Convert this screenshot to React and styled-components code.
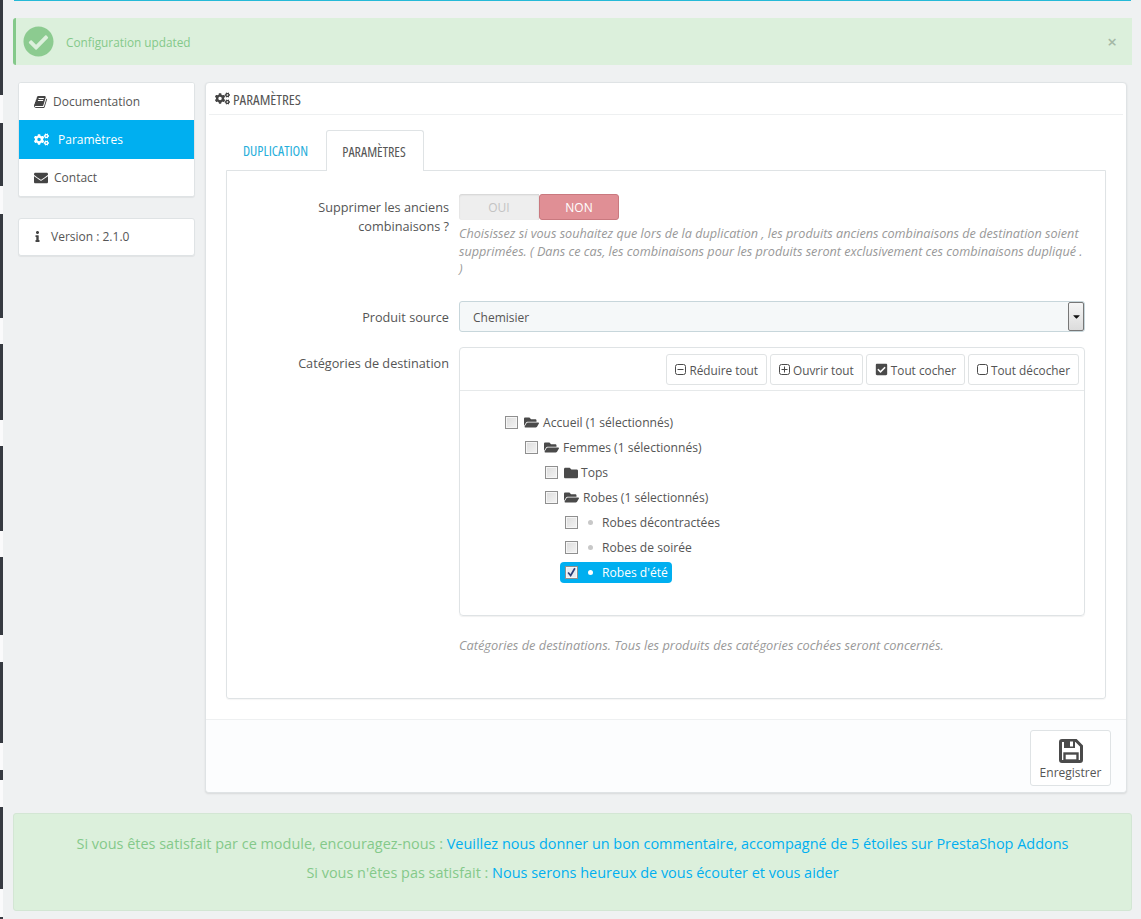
import React from 'react';
import styled, { createGlobalStyle } from 'styled-components';
import {
  FaCogs, FaEnvelope, FaInfo, FaCheckCircle, FaFolder, FaFolderOpen,
  FaCheckSquare, FaCaretDown,
} from 'react-icons/fa';

const GlobalStyle = createGlobalStyle`
  html, body {
    margin: 0;
    padding: 0;
    background: #eff1f2;
    font-family: "Open Sans", "Liberation Sans", sans-serif;
    font-size: 12px;
    color: #555;
  }
`;

const stripParts = [95, 28, 63, 28, 104, 26, 76, 26, 85, 26, 78, 27, 81, 27, 10, 27, 82, 28, 2];

const BookIcon = () => (
  <svg viewBox="0 0 1792 1792" width="14" height="14" fill="currentColor">
    <path d="M1639 478q40 57 18 129l-275 906q-19 64-76.5 107.5t-122.5 43.5h-923q-77 0-148.5-53.5t-99.5-131.5q-24-67-2-127 0-4 3-27t4-37q1-8-3-21.5t-3-19.5q2-11 8-21t16.5-23.5 16.5-23.5q23-38 45-91.5t30-91.5q3-10 .5-30t-.5-28q3-11 17-28t17-23q21-36 42-92t25-90q1-9-2.5-32t.5-28q4-13 22-30.5t22-22.5q19-26 42.5-84.5t27.5-96.5q1-8-3-25.5t-2-26.5q2-8 9-18t18-23 17-21q8-12 16.5-30.5t15-35 16-36 19.5-32 26.5-23.5 36-11.5 47.5 5.5l-1 3q38-9 51-9h761q74 0 114 56t18 130l-274 906q-36 119-71.5 153.5t-128.5 34.5h-869q-27 0-38 15-11 16-1 43 24 70 144 70h923q29 0 56-15.5t35-41.5l300-987q7-22 5-57 38 15 59 43zm-1064 2q-4 13 2 22.5t20 9.5h608q13 0 25.5-9.5t16.5-22.5l21-64q4-13-2-22.5t-20-9.5h-608q-13 0-25.5 9.5t-16.5 22.5zm-83 256q-4 13 2 22.5t20 9.5h608q13 0 25.5-9.5t16.5-22.5l21-64q4-13-2-22.5t-20-9.5h-608q-13 0-25.5 9.5t-16.5 22.5z" />
  </svg>
);

const SaveIcon = () => (
  <svg viewBox="0 0 24 24" width="24" height="24">
    <path d="M1.5 3 Q1.5 1.5 3 1.5 H17 L22.5 7 V21 Q22.5 22.5 21 22.5 H3 Q1.5 22.5 1.5 21 Z" fill="none" stroke="#4a4a4a" strokeWidth="3" />
    <rect x="5" y="1" width="11" height="8" fill="#4a4a4a" />
    <rect x="11" y="2.5" width="3" height="5" fill="#fff" />
    <rect x="5.5" y="14.5" width="13" height="7" fill="none" stroke="#4a4a4a" strokeWidth="2.4" />
  </svg>
);

// thin outlined square of the tree toolbar, with a minus, a plus or nothing in it
const SquareIcon = ({ sign }) => (
  <svg viewBox="0 0 11 11" width="11" height="11" fill="none" stroke="#4a4a4a">
    <rect x="0.5" y="0.5" width="10" height="10" rx="2" />
    {sign && <path d="M2.5 5.5 H8.5" />}
    {sign === 'plus' && <path d="M5.5 2.5 V8.5" />}
  </svg>
);

const App = () => {
  return (
    <Page>
      <GlobalStyle />
      <Strip>
        {stripParts.map((h, i) => (
          <StripPart key={i} $light={i % 2 === 1} style={{ height: h }} />
        ))}
      </Strip>
      <Content>
        <TopLine />
        <Alert>
          <FaCheckCircle size={31} color="#8ccb90" />
          <AlertText>Configuration updated</AlertText>
          <Close>×</Close>
        </Alert>

        <Columns>
          <Side>
            <Card>
              <MenuItem $gap={5}>
                <BookIcon />
                <span>Documentation</span>
              </MenuItem>
              <MenuItem $gap={9} $active>
                <FaCogs size={15} />
                <span>Paramètres</span>
              </MenuItem>
              <MenuItem $gap={6}>
                <FaEnvelope size={14} />
                <span>Contact</span>
              </MenuItem>
            </Card>
            <Card>
              <VersionRow>
                <FaInfo size={11} />
                <span>Version : 2.1.0</span>
              </VersionRow>
            </Card>
          </Side>

          <Panel>
            <PanelHead>
              <FaCogs size={15} />
              <span>PARAMÈTRES</span>
            </PanelHead>
            <PanelBody>
              <Tabs>
                <Tab>DUPLICATION</Tab>
                <Tab $active>PARAMÈTRES</Tab>
              </Tabs>
              <TabBox>
                <FormRow>
                  <Label $top={4}>Supprimer les anciens combinaisons ?</Label>
                  <Field>
                    <Toggle>
                      <ToggleOff>OUI</ToggleOff>
                      <ToggleOn>NON</ToggleOn>
                    </Toggle>
                    <Hint>
                      Choisissez si vous souhaitez que lors de la duplication , les produits anciens combinaisons de destination soient supprimées. ( Dans ce cas, les combinaisons pour les produits seront exclusivement ces combinaisons dupliqué . )
                    </Hint>
                  </Field>
                </FormRow>

                <SelectRow>
                  <Label $top={7}>Produit source</Label>
                  <Field>
                    <SelectBox>
                      <SelectText>Chemisier</SelectText>
                      <SelectArrow><FaCaretDown size={11} /></SelectArrow>
                    </SelectBox>
                  </Field>
                </SelectRow>

                <CategoryRow>
                  <Label $top={7}>Catégories de destination</Label>
                  <Field>
                    <TreePanel>
                      <TreeTools>
                        <ToolButton><SquareIcon sign="minus" />Réduire tout</ToolButton>
                        <ToolButton><SquareIcon sign="plus" />Ouvrir tout</ToolButton>
                        <ToolButton><FaCheckSquare size={13} />Tout cocher</ToolButton>
                        <ToolButton><SquareIcon />Tout décocher</ToolButton>
                      </TreeTools>
                      <Tree>
                        <TreeRow $level={0}>
                          <Check /><FolderIcon><FaFolderOpen size={15} /></FolderIcon>Accueil (1 sélectionnés)
                        </TreeRow>
                        <TreeRow $level={1}>
                          <Check /><FolderIcon><FaFolderOpen size={15} /></FolderIcon>Femmes (1 sélectionnés)
                        </TreeRow>
                        <TreeRow $level={2}>
                          <Check /><FolderIcon $closed><FaFolder size={14} /></FolderIcon>Tops
                        </TreeRow>
                        <TreeRow $level={2}>
                          <Check /><FolderIcon><FaFolderOpen size={15} /></FolderIcon>Robes (1 sélectionnés)
                        </TreeRow>
                        <TreeRow $level={3}>
                          <Check /><Dot />Robes décontractées
                        </TreeRow>
                        <TreeRow $level={3}>
                          <Check /><Dot />Robes de soirée
                        </TreeRow>
                        <TreeRow $level={3}>
                          <Selected>
                            <Check $checked>
                              <svg viewBox="0 0 13 13" width="11" height="11">
                                <path d="M2.5 6.5 L5.5 10 L10.5 1.5" fill="none" stroke="#2c3e78" strokeWidth="2" />
                              </svg>
                            </Check>
                            <Dot $light />Robes d'été
                          </Selected>
                        </TreeRow>
                      </Tree>
                    </TreePanel>
                    <TreeHint>Catégories de destinations. Tous les produits des catégories cochées seront concernés.</TreeHint>
                  </Field>
                </CategoryRow>
              </TabBox>
            </PanelBody>
            <PanelFoot>
              <SaveButton>
                <SaveIcon />
                <span>Enregistrer</span>
              </SaveButton>
            </PanelFoot>
          </Panel>
        </Columns>

        <Rating>
          <p>Si vous êtes satisfait par ce module, encouragez-nous : <a>Veuillez nous donner un bon commentaire, accompagné de 5 étoiles sur PrestaShop Addons</a></p>
          <p>Si vous n'êtes pas satisfait : <a>Nous serons heureux de vous écouter et vous aider</a></p>
        </Rating>
      </Content>
    </Page>
  );
};

export default App;

const Page = styled.div`
  display: flex;
  height: 919px;
  overflow: hidden;
`;

const Strip = styled.div`
  width: 3px;
  flex: none;
  display: flex;
  flex-direction: column;
`;

const StripPart = styled.div`
  flex: none;
  background: ${(p) => (p.$light ? '#fafafb' : '#363a41')};
`;

const Content = styled.div`
  flex: 1;
  min-width: 0;
  padding: 0 9px 0 10px;
`;

const TopLine = styled.div`
  height: 1px;
  margin: 0 1px;
  background: #25b9d7;
`;

const Alert = styled.div`
  margin-top: 17px;
  height: 47px;
  box-sizing: border-box;
  display: flex;
  align-items: center;
  padding: 0 15px 0 7px;
  background: #dcf0dc;
  border-left: 3px solid #84c98a;
  border-radius: 3px 0 0 3px;
`;

const AlertText = styled.span`
  margin-left: 12px;
  color: #84c98a;
  font-size: 11.8px;
`;

const Close = styled.span`
  margin-left: auto;
  color: #a5b8a6;
  font-size: 17px;
  font-weight: 600;
`;

const Columns = styled.div`
  display: flex;
  align-items: flex-start;
  gap: 10px;
  margin: 17px 5px 0 5px;
`;

const Side = styled.div`
  width: 177px;
  flex: none;
  display: flex;
  flex-direction: column;
  gap: 21px;
`;

const Card = styled.div`
  background: #fff;
  border: 1px solid #dfe3e5;
  border-radius: 3px;
  box-shadow: 0 1px 1px rgba(0, 0, 0, 0.06);
  overflow: hidden;
`;

const MenuItem = styled.div`
  height: ${(p) => (p.$active ? '39px' : '37px')};
  display: flex;
  align-items: center;
  gap: ${(p) => p.$gap}px;
  padding-left: 15px;
  color: ${(p) => (p.$active ? '#fff' : '#555')};
  background: ${(p) => (p.$active ? '#00aff0' : '#fff')};
  svg {
    color: ${(p) => (p.$active ? '#fff' : '#444')};
  }
`;

const VersionRow = styled.div`
  height: 36px;
  box-sizing: border-box;
  display: flex;
  align-items: center;
  gap: 8px;
  padding: 0 0 2px 13px;
  svg {
    color: #444;
  }
`;

const Panel = styled.div`
  width: 922px;
  height: 711px;
  flex: none;
  display: flex;
  flex-direction: column;
  box-sizing: border-box;
  background: #fff;
  border: 1px solid #dfe3e5;
  border-radius: 4px;
  box-shadow: 0 1px 2px rgba(0, 0, 0, 0.1);
`;

const PanelHead = styled.div`
  height: 31px;
  flex: none;
  margin: 0 3px;
  padding-left: 6px;
  display: flex;
  align-items: center;
  gap: 3px;
  border-bottom: 1px solid #eef0f1;
  font-size: 15px;
  font-stretch: 75%;
  color: #555;
  svg {
    color: #444;
  }
`;

const PanelBody = styled.div`
  flex: 1;
  padding: 15px 20px 0;
`;

const Tabs = styled.div`
  display: flex;
  padding-left: 1px;
  height: 41px;
`;

const Tab = styled.div`
  box-sizing: border-box;
  height: ${(p) => (p.$active ? '41px' : '40px')};
  width: ${(p) => (p.$active ? '98px' : '99px')};
  padding-right: 2px;
  display: flex;
  align-items: center;
  justify-content: center;
  font-size: 14px;
  font-stretch: 75%;
  color: ${(p) => (p.$active ? '#555' : '#25aeda')};
  background: #fff;
  position: relative;
  z-index: 1;
  border: ${(p) => (p.$active ? '1px solid #dfe3e5' : 'none')};
  border-bottom: none;
  border-radius: 3px 3px 0 0;
`;

const TabBox = styled.div`
  margin-top: -1px;
  height: 529px;
  box-sizing: border-box;
  padding-top: 23px;
  border: 1px solid #dfe3e5;
  border-radius: 0 0 3px 3px;
  box-shadow: 0 1px 1px rgba(0, 0, 0, 0.04);
`;

const FormRow = styled.div`
  display: grid;
  grid-template-columns: 222px 626px;
  column-gap: 10px;
`;

const SelectRow = styled(FormRow)`
  margin-top: 23.5px;
`;

const CategoryRow = styled(FormRow)`
  margin-top: 15px;
`;

const Label = styled.div`
  padding: ${(p) => p.$top}px 0 0 30px;
  text-align: right;
  font-size: 12.7px;
  line-height: 19px;
  color: #555;
`;

const Field = styled.div`
  min-width: 0;
`;

const Toggle = styled.div`
  display: flex;
  width: 160px;
  height: 26px;
`;

const ToggleOff = styled.div`
  width: 80px;
  display: flex;
  align-items: center;
  justify-content: center;
  background: #eee;
  border-radius: 3px 0 0 3px;
  color: #c3c3c3;
  box-shadow: inset 0 1px 2px rgba(0, 0, 0, 0.12);
`;

const ToggleOn = styled.div`
  width: 80px;
  box-sizing: border-box;
  display: flex;
  align-items: center;
  justify-content: center;
  background: #e08f95;
  border: 1px solid #c9797f;
  border-radius: 3px;
  color: #fff;
`;

const Hint = styled.p`
  margin: 5px 0 0;
  font-size: 12.65px;
  line-height: 17.5px;
  font-style: italic;
  color: #999;
`;

const SelectBox = styled.div`
  height: 31px;
  box-sizing: border-box;
  display: flex;
  align-items: center;
  justify-content: space-between;
  padding-left: 13px;
  background: #f5f8f9;
  border: 1px solid #c7d6db;
  border-radius: 3px;
`;

const SelectText = styled.span`
  margin-top: 2px;
`;

const SelectArrow = styled.div`
  width: 16px;
  height: 29px;
  box-sizing: border-box;
  display: flex;
  align-items: center;
  justify-content: center;
  background: linear-gradient(#f6f6f6, #dcdcdc);
  border: 1px solid #777;
  border-radius: 2px;
  color: #111;
`;

const TreePanel = styled.div`
  height: 269px;
  box-sizing: border-box;
  border: 1px solid #dfe3e5;
  border-radius: 4px;
  box-shadow: 0 1px 1px rgba(0, 0, 0, 0.06);
`;

const TreeTools = styled.div`
  height: 43px;
  box-sizing: border-box;
  display: flex;
  justify-content: flex-end;
  gap: 3px;
  padding: 6px 5px 0 0;
  border-bottom: 1px solid #e6e9ea;
`;

const ToolButton = styled.div`
  height: 31px;
  box-sizing: border-box;
  display: flex;
  align-items: center;
  gap: 3px;
  padding: 0 8px;
  background: #fff;
  border: 1px solid #e0e3e4;
  border-radius: 3px;
  color: #555;
  font-size: 11.8px;
  svg {
    color: #4a4a4a;
  }
`;

const Tree = styled.div`
  padding: 19px 0 0 45px;
`;

const TreeRow = styled.div`
  height: 25px;
  display: flex;
  align-items: center;
  padding-left: ${(p) => p.$level * 20}px;
  color: #555;
  font-size: 12.1px;
`;

const Check = styled.span`
  width: 13px;
  height: 13px;
  flex: none;
  box-sizing: border-box;
  display: flex;
  align-items: center;
  justify-content: center;
  margin-right: 6px;
  background: ${(p) => (p.$checked ? '#e8ebf2' : 'linear-gradient(135deg, #dcdcdc, #f4f4f4)')};
  border: 1px solid #8f8f8f;
  box-shadow: inset 0 0 0 1px #f6f6f6;
`;

const FolderIcon = styled.span`
  width: ${(p) => (p.$closed ? '17px' : '19px')};
  flex: none;
  display: flex;
  color: #4a4a4a;
`;

const Dot = styled.span`
  width: 5px;
  height: 5px;
  flex: none;
  margin: 0 9px 0 4px;
  border-radius: 50%;
  background: ${(p) => (p.$light ? '#fff' : '#c8c8c8')};
`;

const Selected = styled.div`
  display: flex;
  align-items: center;
  height: 21px;
  margin-left: -5px;
  padding: 0 4px 0 5px;
  background: #00aff0;
  border-radius: 4px;
  color: #fff;
`;

const TreeHint = styled(Hint)`
  margin-top: 21px;
  font-size: 12.8px;
`;

const PanelFoot = styled.div`
  height: 73px;
  flex: none;
  box-sizing: border-box;
  display: flex;
  justify-content: flex-end;
  padding: 10px 15px 0 0;
  background: #fcfdfe;
  border-top: 1px solid #eef0f1;
  border-radius: 0 0 4px 4px;
`;

const SaveButton = styled.div`
  width: 81px;
  height: 56px;
  box-sizing: border-box;
  display: flex;
  flex-direction: column;
  align-items: center;
  gap: 1px;
  padding-top: 8px;
  background: #fff;
  border: 1px solid #dfe3e5;
  border-radius: 3px;
  color: #555;
`;

const Rating = styled.div`
  margin-top: 20px;
  height: 98px;
  box-sizing: border-box;
  padding-top: 15px;
  background: #dcf0dc;
  border: 1px solid #d3e6d4;
  border-radius: 3px;
  text-align: center;
  font-size: 14.44px;
  color: #84c98a;
  p {
    margin: 0;
    line-height: 29px;
  }
  a {
    color: #00aff0;
  }
`;
